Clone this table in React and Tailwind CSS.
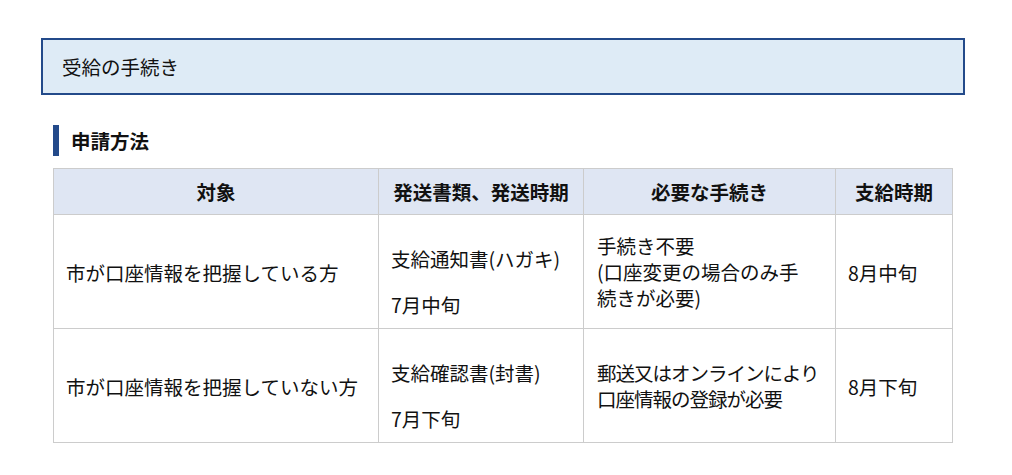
import React from "react";

const rows = [
  {
    target: "市が口座情報を把握している方",
    docs: ["支給通知書(ハガキ)", "7月中旬"],
    steps: ["手続き不要", "(口座変更の場合のみ手", "続きが必要)"],
    pay: "8月中旬",
    tight: false,
  },
  {
    target: "市が口座情報を把握していない方",
    docs: ["支給確認書(封書)", "7月下旬"],
    steps: ["郵送又はオンラインにより", "口座情報の登録が必要"],
    pay: "8月下旬",
    tight: true,
  },
];

export default function App() {
  return (
    <div
      className="w-[1012px] h-[475px] bg-white text-[#111111] pl-[41px] pt-[38px]"
      style={{ fontFamily: '"Noto Sans CJK JP", "Noto Sans", sans-serif' }}
    >
      {/* Title */}
      <div className="w-[924px] h-[57px] border-2 border-[#234a8a] bg-[#deebf6] flex items-center pl-[19px]">
        <h2 className="text-[19.5px]">受給の手続き</h2>
      </div>

      <div className="ml-[12px] w-[899px]">
        {/* Heading */}
        <div className="mt-[30px] flex items-center h-[31px]">
          <span className="w-[6px] h-[31px] bg-[#234a8a]"></span>
          <h3 className="ml-[12px] text-[19.5px] font-bold">申請方法</h3>
        </div>

        {/* Table */}
        <table className="mt-[12px] w-[899px] table-fixed border-collapse text-[19.5px] leading-[26px]">
          <colgroup>
            <col className="w-[325px]" />
            <col className="w-[205px]" />
            <col className="w-[252px]" />
            <col className="w-[117px]" />
          </colgroup>
          <thead>
            <tr className="bg-[#dfe6f3] h-[46px]">
              <th className="border border-[#cccccc] font-bold">対象</th>
              <th className="border border-[#cccccc] font-bold">発送書類、発送時期</th>
              <th className="border border-[#cccccc] font-bold">必要な手続き</th>
              <th className="border border-[#cccccc] font-bold">支給時期</th>
            </tr>
          </thead>
          <tbody>
            {rows.map((r) => (
              <tr key={r.target}>
                <td className="border border-[#cccccc] px-[12px] pt-[3px] align-middle">{r.target}</td>
                <td className="border border-[#cccccc] px-[12px] py-[10px] align-middle">
                  <p className="mt-[21px]">{r.docs[0]}</p>
                  <p className="mt-[20px]">{r.docs[1]}</p>
                </td>
                <td className="border border-[#cccccc] px-[13px] align-middle">
                  {r.steps.map((s) => (
                    <p
                      key={s}
                      className={r.tight ? "whitespace-nowrap tracking-[-1px]" : "whitespace-nowrap"}
                    >
                      {s}
                    </p>
                  ))}
                </td>
                <td className="border border-[#cccccc] px-[12px] pt-[3px] align-middle">{r.pay}</td>
              </tr>
            ))}
          </tbody>
        </table>
      </div>
    </div>
  );
}
